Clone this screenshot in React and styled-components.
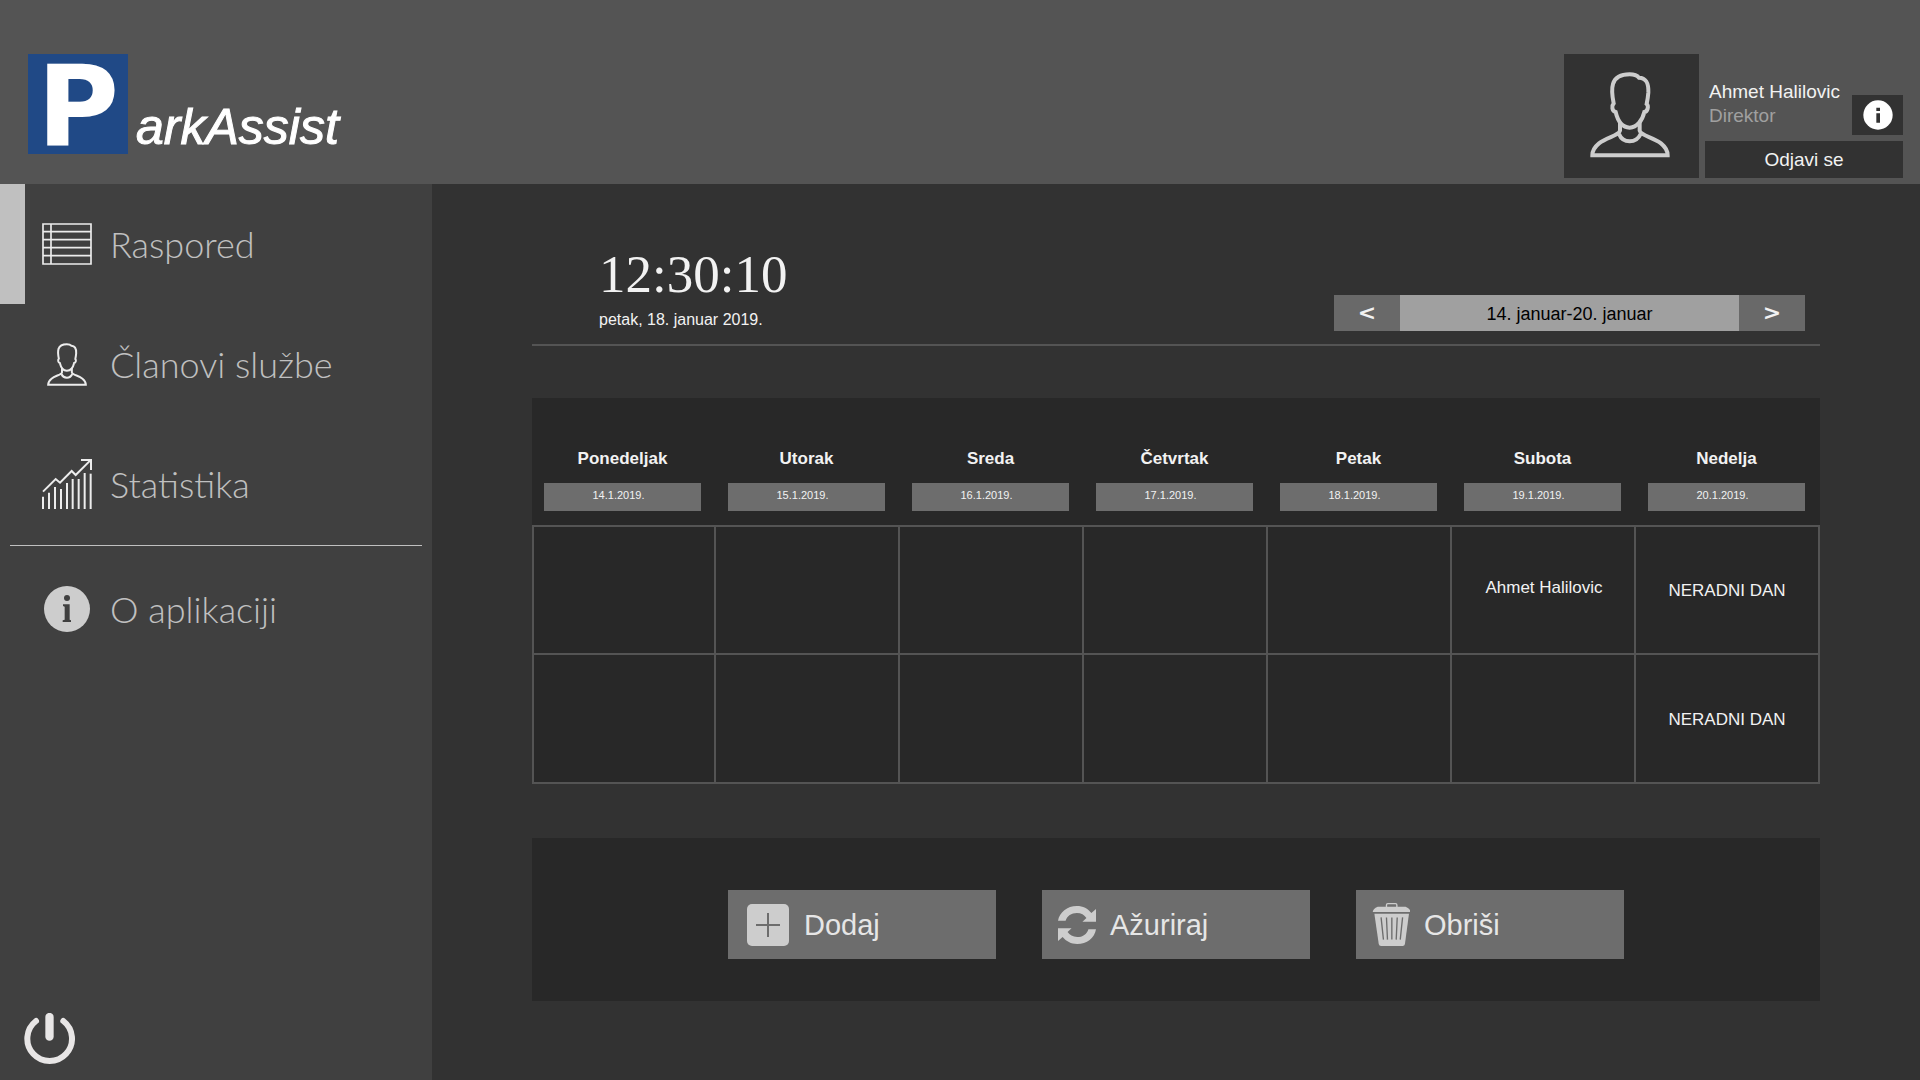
import React from "react";
import styled, { createGlobalStyle } from "styled-components";

const sans = '"Liberation Sans", Arial, sans-serif';

const GlobalStyle = createGlobalStyle`
  *, *::before, *::after { box-sizing: border-box; }
  body {
    margin: 0;
    background: #323232;
    color: #f2f2f2;
    font-family: ${sans};
  }
  button { border: 0; padding: 0; font-family: inherit; color: inherit; cursor: pointer; }
  svg { display: block; flex: none; }
`;

const Page = styled.div`
  display: flex;
  flex-direction: column;
  min-height: 100vh;
`;

const Header = styled.header`
  display: flex;
  justify-content: space-between;
  padding: 54px 17px 6px 28px;
  background: #545454;
`;

const Brand = styled.a`
  display: flex;
  align-items: flex-end;
  gap: 8px;
  height: 100px;
  color: #fff;
  text-decoration: none;
`;

const BrandMark = styled.span`
  width: 100px;
  height: 100px;
  background: #204986;
  font: bold 112px/104px "DejaVu Sans", Verdana, sans-serif;
  text-align: center;
`;

const BrandName = styled.span`
  padding-bottom: 2px;
  font-size: 50px;
  line-height: 50px;
  font-style: italic;
  -webkit-text-stroke: 1px #fff;
`;

const Account = styled.div`
  display: flex;
  gap: 6px;
  height: 124px;
`;

const Avatar = styled.div`
  display: flex;
  align-items: center;
  justify-content: center;
  width: 135px;
  padding: 0 4px 2px 0;
  background: #323232;
`;

const AccountDetails = styled.div`
  display: flex;
  flex-direction: column;
  gap: 6px;
  width: 198px;
`;

const AccountTop = styled.div`
  display: flex;
  flex: 1;
  align-items: flex-end;
  justify-content: space-between;
  padding-left: 4px;
`;

const Identity = styled.div`
  padding-bottom: 7px;
  font-size: 19px;
  line-height: 24px;
  white-space: nowrap;
`;

const Role = styled.div`
  color: #a0a0a0;
`;

const InfoButton = styled.button`
  display: flex;
  align-items: center;
  justify-content: center;
  width: 51px;
  height: 40px;
  background: #323232;
`;

const SignOut = styled.button`
  height: 37px;
  background: #323232;
  font-size: 19px;
  line-height: 24px;
`;

const Body = styled.div`
  display: flex;
  flex: 1;
`;

const Sidebar = styled.nav`
  display: flex;
  flex: none;
  flex-direction: column;
  width: 432px;
  background: #404040;
`;

const MenuItem = styled.a`
  display: flex;
  align-items: center;
  gap: 18px;
  height: 120px;
  padding-left: 17px;
  border-left: 25px solid ${(p) => (p.$active ? "#c0c0c0" : "transparent")};
  color: #c0c0c0;
  font: 300 36px/40px Lato, "Century Gothic", sans-serif;
  text-decoration: none;
`;

const MenuIcon = styled.span`
  display: flex;
  justify-content: center;
  width: 50px;
`;

const Divider = styled.hr`
  width: auto;
  height: 1px;
  margin: 1px 10px 3px;
  border: 0;
  background: #c0c0c0;
`;

const PowerButton = styled.button`
  align-self: flex-start;
  margin: auto 0 16px 24px;
  background: none;
`;

const Main = styled.main`
  flex: 1;
  padding: 0 100px 79px;
`;

const TopBar = styled.div`
  display: flex;
  align-items: flex-end;
  justify-content: space-between;
  padding: 60px 15px 13px 67px;
  border-bottom: 2px solid #545454;
`;

const Time = styled.div`
  margin-bottom: 6px;
  font: 53px/60px "Liberation Serif", "Times New Roman", serif;
`;

const Today = styled.div`
  padding-bottom: 1px;
  font-size: 16px;
  line-height: 20px;
`;

const WeekPicker = styled.div`
  display: flex;
  height: 36px;
`;

const WeekStep = styled.button`
  width: 66px;
  background: #696969;
  font: bold 22px/36px "DejaVu Sans", Verdana, sans-serif;
`;

const WeekLabel = styled.div`
  width: 339px;
  background: #a0a0a0;
  color: #000;
  font-size: 18px;
  line-height: 38px;
  text-align: center;
`;

const Schedule = styled.table`
  width: 100%;
  margin-top: 52px;
  border-spacing: 0;
  table-layout: fixed;
  background: #282828;
`;

const DayHead = styled.th`
  padding: 51px 15px 14px 12px;
  font-size: 17px;
  line-height: 20px;
`;

const DayDate = styled.div`
  height: 28px;
  margin-top: 14px;
  padding-right: 8px;
  background: #6d6d6d;
  font-size: 11px;
  font-weight: 400;
  line-height: 24px;
`;

const Slot = styled.td`
  height: 129px;
  padding: 2px 0 0;
  border: solid #545454;
  border-width: 0 2px 2px 0;
  font-size: 17px;
  line-height: 20px;
  text-align: center;

  &:first-child { border-left-width: 2px; }
  tr:first-child > & { height: 130px; border-top-width: 2px; }
`;

const Shift = styled.div`
  padding: 0 0 6px 2px;
`;

const Actions = styled.div`
  display: flex;
  justify-content: center;
  gap: 46px;
  margin-top: 54px;
  padding: 52px 0 42px;
  background: #282828;
`;

const ActionButton = styled.button`
  display: flex;
  align-items: center;
  gap: ${(p) => (p.$wide ? 11 : 8)}px;
  width: 268px;
  height: 69px;
  padding-left: ${(p) => (p.$wide ? 15 : 10)}px;
  background: #6d6d6d;
  color: #e6e6e6;
  font-size: 29px;
  line-height: 36px;
`;

const ActionIcon = styled.span`
  display: flex;
  justify-content: center;
  width: 50px;
`;

const PersonIcon = ({ width, height, color }) => (
  <svg width={width} height={height} viewBox="149 96 240 258" fill="none" stroke={color} strokeWidth="12" aria-hidden="true">
    <path d="M220 190C212 150 207 103 268 103C284 103 291 107 296 113C320 114 325 132 324 158C323 172 321 182 319 192C326 198 322 215 312 216C306 242 290 262 268 263C246 262 232 242 226 216C215 213 213 198 220 190Z" />
    <path d="M239 246V272C236 287 200 291 176 310C160 323 156 334 156 346H382C382 334 378 323 362 310C338 291 301 287 298 272V246" />
    <path d="M236 282Q245 304 268 304Q291 304 301 282" />
  </svg>
);

const TableIcon = () => (
  <svg width="50" height="42" viewBox="126 582 150 126" fill="none" stroke="#ececec" strokeWidth="5" aria-hidden="true">
    <path d="M129 585H273V705H129Z M129 608H273M129 632H273M129 656H273M129 680H273M153 585V705" />
  </svg>
);

const bars = [[129, 530], [147, 518], [165, 501], [183, 507], [201, 489], [218, 477], [236, 477], [254, 459], [272, 461]];

const StatsIcon = () => (
  <svg width="50" height="50" viewBox="126 417 150 150" fill="none" stroke="#ececec" strokeWidth="6" aria-hidden="true">
    {bars.map(([x, top]) => (
      <path key={x} d={`M${x} ${top}V567`} />
    ))}
    <path d="M129 515L167 477L180 488L215 453L227 465L271 421M243 420H273V450" />
  </svg>
);

const AboutIcon = () => (
  <svg width="46" height="46" viewBox="132 798 138 138" aria-hidden="true">
    <circle cx="201" cy="867" r="69" fill="#cdcdcd" />
    <circle cx="201" cy="834" r="9" fill="#404040" />
    <path d="M189 853H209V899L213 901V906H188V901L194 899V860L189 858Z" fill="#404040" />
  </svg>
);

const InfoIcon = () => (
  <svg width="30" height="30" viewBox="967 181 90 90" aria-hidden="true">
    <circle cx="1012" cy="226" r="44" fill="#fff" />
    <path d="M1007 204H1018V214H1007ZM1007 221H1018V249H1007Z" fill="#323232" />
  </svg>
);

const PowerIcon = () => (
  <svg width="51" height="51" viewBox="72 99 153 153" fill="none" stroke="#e8e6e6" strokeLinecap="round" aria-hidden="true">
    <path d="M108 123A67 67 0 1 0 190 123" strokeWidth="18" />
    <path d="M148.500 111V170" strokeWidth="25" />
  </svg>
);

const PlusIcon = () => (
  <svg width="42" height="42" viewBox="0 0 42 42" aria-hidden="true">
    <rect width="42" height="42" rx="5" fill="#cdcdcd" />
    <path d="M9 21H33M21 9V33" stroke="#6d6d6d" strokeWidth="2" />
  </svg>
);

const RefreshIcon = () => (
  <svg width="38" height="38" viewBox="960 33 115 115" fill="#cdcdcd" aria-hidden="true">
    <path id="half" d="M960 78C964 52 988 33 1017 33C1036 33 1050 41 1061 54L1075 42V81H1034L1046 69C1040 60 1030 54 1017 54C1001 54 987 63 983 78Z" />
    <use href="#half" transform="rotate(180 1017.500 90.500)" />
  </svg>
);

const TrashIcon = () => (
  <svg width="38" height="44" viewBox="39 25 113 131" aria-hidden="true">
    <path d="M82 38V31Q82 27 86 27H109Q113 27 113 31V38" fill="none" stroke="#cdcdcd" strokeWidth="4" />
    <path d="M41 52Q42 42 56 36H139Q153 42 154 52Z" fill="#cdcdcd" />
    <path d="M46 57H149L137 147Q136 153 130 153H66Q60 153 59 147Z" fill="#cdcdcd" />
    <path d="M66 68L73 134M82 68L85 134M98 68V134M114 68L111 134M130 68L123 134" stroke="#6d6d6d" strokeWidth="4" />
  </svg>
);

const menu = [
  { label: "Raspored", icon: <TableIcon />, active: true },
  { label: "Članovi službe", icon: <PersonIcon width={40} height={43} color="#ececec" /> },
  { label: "Statistika", icon: <StatsIcon /> },
];

const days = [
  ["Ponedeljak", "14.1.2019."],
  ["Utorak", "15.1.2019."],
  ["Sreda", "16.1.2019."],
  ["Četvrtak", "17.1.2019."],
  ["Petak", "18.1.2019."],
  ["Subota", "19.1.2019."],
  ["Nedelja", "20.1.2019."],
];

const shifts = [
  [null, null, null, null, null, "Ahmet Halilovic"],
  [null, null, null, null, null, null],
];

const actions = [
  { label: "Dodaj", icon: <PlusIcon />, wide: true },
  { label: "Ažuriraj", icon: <RefreshIcon /> },
  { label: "Obriši", icon: <TrashIcon /> },
];

export default function App() {
  return (
    <Page>
      <GlobalStyle />
      <Header>
        <Brand href="#">
          <BrandMark>P</BrandMark>
          <BrandName>arkAssist</BrandName>
        </Brand>
        <Account>
          <Avatar>
            <PersonIcon width={80} height={86} color="#cdcdcd" />
          </Avatar>
          <AccountDetails>
            <AccountTop>
              <Identity>
                <div>Ahmet Halilovic</div>
                <Role>Direktor</Role>
              </Identity>
              <InfoButton type="button" aria-label="Informacije">
                <InfoIcon />
              </InfoButton>
            </AccountTop>
            <SignOut type="button">Odjavi se</SignOut>
          </AccountDetails>
        </Account>
      </Header>
      <Body>
        <Sidebar>
          {menu.map((item) => (
            <MenuItem key={item.label} href="#" $active={item.active}>
              <MenuIcon>{item.icon}</MenuIcon>
              {item.label}
            </MenuItem>
          ))}
          <Divider />
          <MenuItem href="#">
            <MenuIcon>
              <AboutIcon />
            </MenuIcon>
            O aplikaciji
          </MenuItem>
          <PowerButton type="button" aria-label="Isključi">
            <PowerIcon />
          </PowerButton>
        </Sidebar>
        <Main>
          <TopBar>
            <div>
              <Time>12:30:10</Time>
              <Today>petak, 18. januar 2019.</Today>
            </div>
            <WeekPicker>
              <WeekStep type="button">&lt;</WeekStep>
              <WeekLabel>14. januar-20. januar</WeekLabel>
              <WeekStep type="button">&gt;</WeekStep>
            </WeekPicker>
          </TopBar>
          <Schedule>
            <thead>
              <tr>
                {days.map(([name, date]) => (
                  <DayHead key={name} scope="col">
                    {name}
                    <DayDate>{date}</DayDate>
                  </DayHead>
                ))}
              </tr>
            </thead>
            <tbody>
              {shifts.map((row, i) => (
                <tr key={i}>
                  {row.map((worker, j) => (
                    <Slot key={j}>{worker && <Shift>{worker}</Shift>}</Slot>
                  ))}
                  <Slot>NERADNI DAN</Slot>
                </tr>
              ))}
            </tbody>
          </Schedule>
          <Actions>
            {actions.map((action) => (
              <ActionButton key={action.label} type="button" $wide={action.wide}>
                <ActionIcon>{action.icon}</ActionIcon>
                {action.label}
              </ActionButton>
            ))}
          </Actions>
        </Main>
      </Body>
    </Page>
  );
}
